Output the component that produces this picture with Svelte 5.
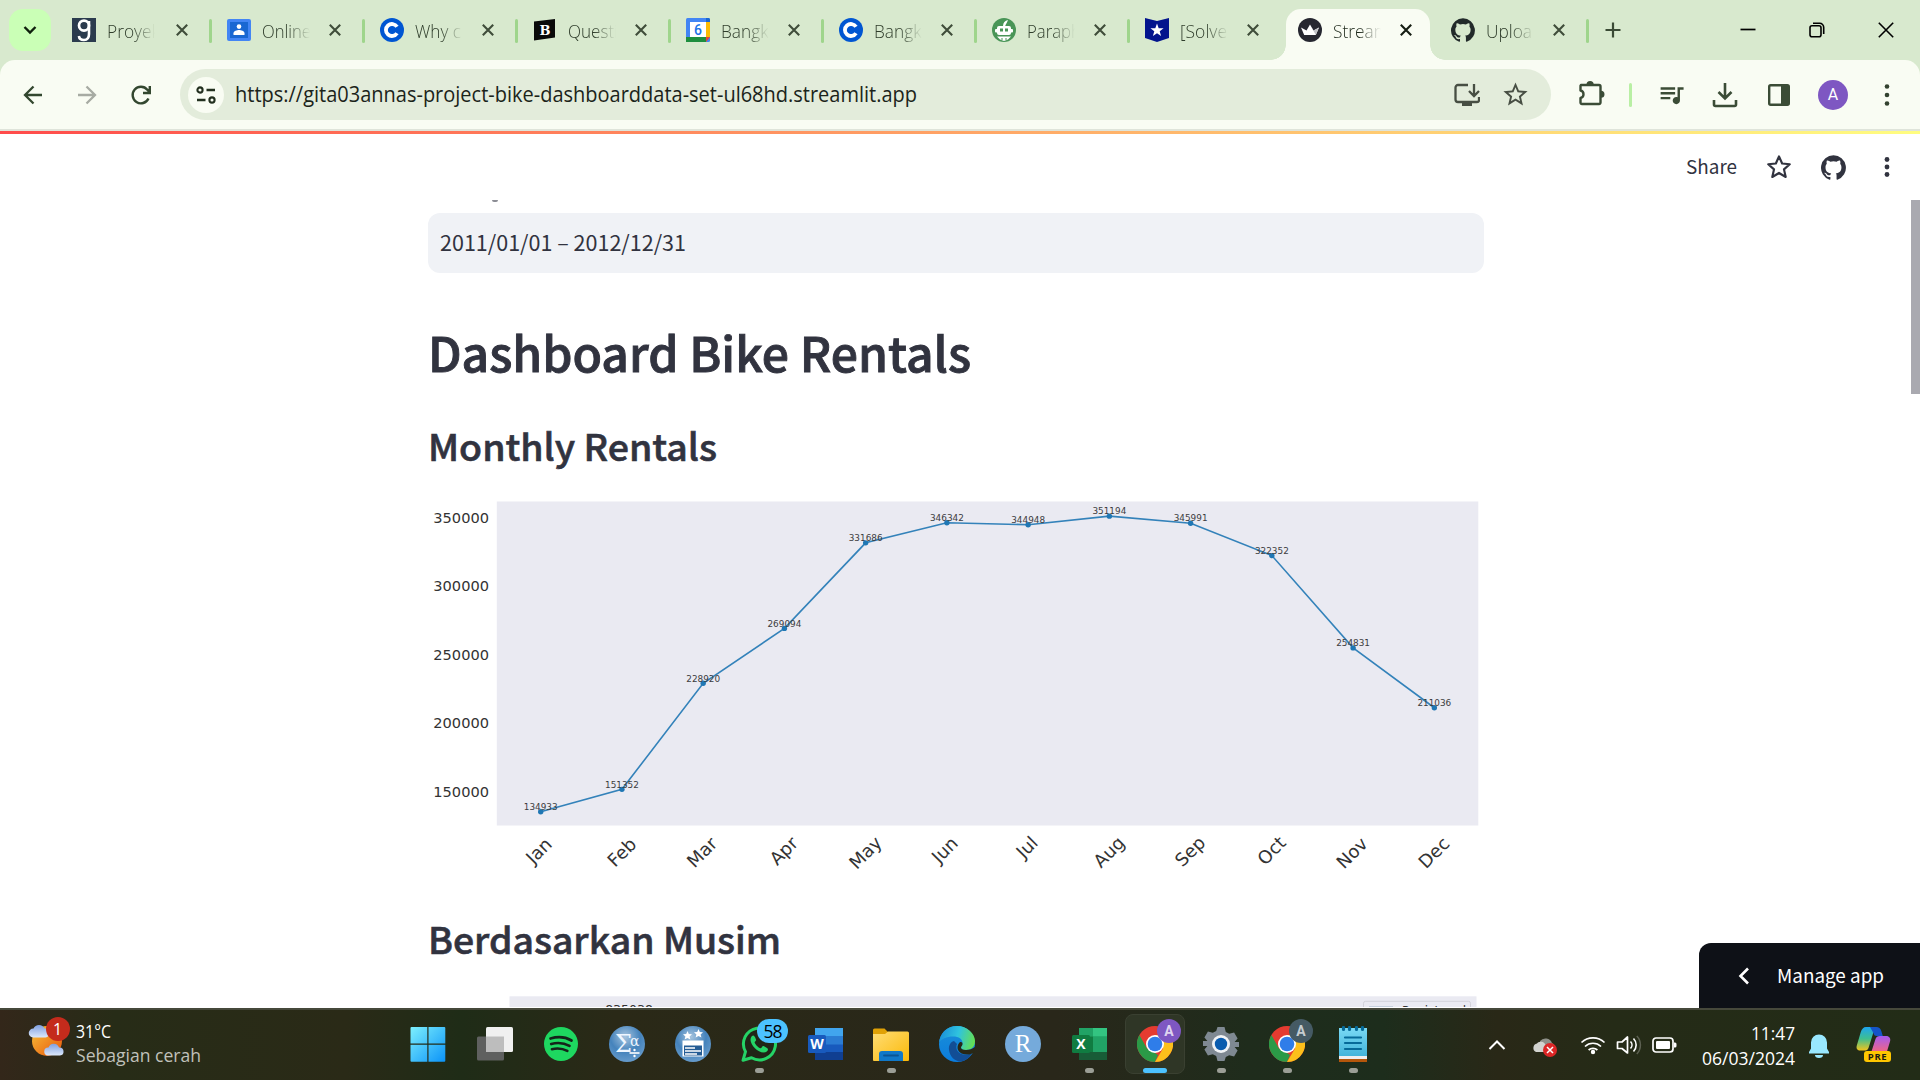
<script>
  const tabs = [
    { title: 'Proyek', icon: 'goodreads', w: 53 },
    { title: 'Online', icon: 'classroom', w: 49 },
    { title: 'Why c', icon: 'coursera', w: 46 },
    { title: 'Questi', icon: 'bold', w: 50 },
    { title: 'Bangk', icon: 'calendar', w: 47.5 },
    { title: 'Bangk', icon: 'coursera', w: 47.5 },
    { title: 'Paraph', icon: 'quill', w: 54 },
    { title: '[Solve', icon: 'shield', w: 47 },
    { title: 'Stream', icon: 'streamlit', w: 56, active: true },
    { title: 'Uploa', icon: 'github', w: 46 }
  ];

  const months = [
    { name: 'Jan', value: 134933, lx: 538.8, ly: 851.3 },
    { name: 'Feb', value: 151352, lx: 621.8, ly: 852.8 },
    { name: 'Mar', value: 228920, lx: 702, ly: 853 },
    { name: 'Apr', value: 269094, lx: 783.6, ly: 851.5 },
    { name: 'May', value: 331686, lx: 865.3, ly: 853.3 },
    { name: 'Jun', value: 346342, lx: 944.7, ly: 850.5 },
    { name: 'Jul', value: 344948, lx: 1026.8, ly: 847.8 },
    { name: 'Aug', value: 351194, lx: 1108.9, ly: 852.5 },
    { name: 'Sep', value: 345991, lx: 1190, ly: 852 },
    { name: 'Oct', value: 322352, lx: 1271.4, ly: 851.3 },
    { name: 'Nov', value: 254831, lx: 1351.9, ly: 853.5 },
    { name: 'Dec', value: 211036, lx: 1433.8, ly: 853.3 }
  ];
  const ticks = [350000, 300000, 250000, 200000, 150000];
  const px = (i) => 540.7 + i * 81.24;
  const py = (v) => 517.8 + (350000 - v) * 0.001367;
  const line = months.map((m, i) => `${px(i)},${py(m.value)}`).join(' ');

  const apps = [
    { id: 'windows' }, { id: 'taskview' }, { id: 'spotify' }, { id: 'sigma' }, { id: 'ballot' },
    { id: 'whatsapp', open: true }, { id: 'word' }, { id: 'folder', open: true }, { id: 'edge' },
    { id: 'r' }, { id: 'excel', open: true }, { id: 'chrome', active: true },
    { id: 'gear', open: true }, { id: 'chrome2', open: true }, { id: 'notepad', open: true }
  ];

  const githubPath = 'M12 .3a12 12 0 0 0-3.8 23.38c.6.12.83-.26.83-.57L9 21.07c-3.34.72-4.04-1.61-4.04-1.61-.55-1.39-1.34-1.76-1.34-1.76-1.08-.74.09-.73.09-.73 1.2.09 1.83 1.24 1.83 1.24 1.08 1.83 2.81 1.3 3.5 1 .1-.78.42-1.31.76-1.61-2.67-.3-5.47-1.33-5.47-5.93 0-1.31.47-2.38 1.24-3.22-.14-.3-.54-1.52.1-3.18 0 0 1-.32 3.3 1.23a11.5 11.5 0 0 1 6 0c2.28-1.55 3.29-1.23 3.29-1.23.64 1.66.24 2.88.12 3.18a4.65 4.65 0 0 1 1.23 3.22c0 4.61-2.8 5.63-5.48 5.92.42.36.81 1.1.81 2.22l-.01 3.29c0 .31.2.69.82.57A12 12 0 0 0 12 .3';
  const starPath = 'M22 9.24l-7.19-.62L12 2 9.19 8.63 2 9.24l5.46 4.73L5.82 21 12 17.27 18.18 21l-1.63-7.03L22 9.24zM12 15.4l-3.76 2.27 1-4.28-3.32-2.88 4.38-.38L12 6.1l1.71 4.04 4.38.38-3.32 2.88 1 4.28L12 15.4z';
</script>

{#snippet label(text, width, height, baseline, cls)}
  <svg class="label {cls}" {width} {height}>
    <text x="0" y={baseline} textLength={width} lengthAdjust="spacingAndGlyphs">{text}</text>
  </svg>
{/snippet}

{#snippet favicon(id)}
  <svg class="favicon" width="24" height="24" viewBox="0 0 24 24">
    {#if id === 'goodreads'}
      <rect width="24" height="24" fill="#2b3b4e" />
      <ellipse cx="12" cy="7.600" rx="5" ry="5" fill="none" stroke="#fff" stroke-width="2.700" />
      <path d="M17 3v13c0 4.300-2 6-5 6s-4.800-1.300-5.100-4" fill="none" stroke="#fff" stroke-width="2.600" />
    {:else if id === 'classroom'}
      <rect y="1" width="24" height="22" rx="2" fill="#4285f4" />
      <rect x="3" y="4" width="18" height="16" fill="#1967d2" />
      <circle cx="12" cy="8.600" r="2.300" fill="#fff" />
      <path d="M6.500 17v-1.800c0-2 3.500-3.200 5.500-3.200s5.500 1.200 5.500 3.200V17z" fill="#fff" />
    {:else if id === 'coursera'}
      <circle cx="12" cy="12" r="12" fill="#0056d2" />
      <path d="M17 8.800A6 6 0 1 0 17 15.200" fill="none" stroke="#fff" stroke-width="3.800" />
    {:else if id === 'bold'}
      <path d="M1 3.500L22 1v18.500L1 22.500z" fill="#0a0a0a" />
      <text x="6.500" y="16.500" class="slab" fill="#fff">B</text>
    {:else if id === 'calendar'}
      <rect width="24" height="24" rx="1.500" fill="#4285f4" />
      <rect x="20" y="4" width="4" height="15" fill="#fbbc04" />
      <rect y="19" width="20" height="5" fill="#1e8e3e" />
      <path d="M20 0h2.500a1.500 1.500 0 0 1 1.500 1.500V4h-4z" fill="#1967d2" />
      <path d="M20 19h4l-4 5z" fill="#ea4335" />
      <rect x="4" y="4" width="16" height="15" fill="#fff" />
      <text x="12" y="16.800" class="cal" text-anchor="middle" fill="#1a73e8">6</text>
    {:else if id === 'quill'}
      <circle cx="12" cy="12" r="12" fill="#499557" />
      <path d="M11 8c0-3 2-5.500 5-6-1 3-2 3.500-2.800 6z" fill="#fff" />
      <rect x="5" y="8" width="14" height="9" rx="2" fill="#fff" />
      <rect x="3" y="11" width="18" height="3.500" rx="1" fill="#fff" />
      <rect x="8" y="10.500" width="3" height="3" fill="#499557" /><rect x="13" y="10.500" width="3" height="3" fill="#499557" />
      <path d="M5 18.500h14l-3 3-4 1.500-4-1.500z" fill="#fff" /><path d="M9 21h2M13 21h2" stroke="#499557" />
    {:else if id === 'shield'}
      <path d="M0 0l12 3L24 0v20l-12 4L0 20z" fill="#02148d" />
      <path d="M12 5.500l1.700 4.700 4.900.1-3.900 3 1.400 4.800-4.100-2.800-4.100 2.800 1.400-4.800-3.900-3 4.900-.1z" fill="#fff" />
    {:else if id === 'streamlit'}
      <circle cx="12" cy="12" r="12" fill="#262730" />
      <path d="M3 9.500l5.500 3L12 6.500l3.500 6 5.500-3-3.200 7.500H6.200z" fill="#fff" />
      <path d="M12 6.500l3.500 6 5.500-3-3.200 7.500z" fill="#c3c4c8" />
    {:else}
      <path d={githubPath} fill="#222a2a" />
    {/if}
  </svg>
{/snippet}

{#snippet chromeLogo()}
  <circle cx="18" cy="18" r="18" fill="#e53b30" />
  <path d="M2.400 9L10 22.500 18 27l3 2-3 7A18 18 0 0 1 2.400 9z" fill="#2b9a47" />
  <path d="M18 9h15.600A18 18 0 0 1 18 36l8-13.500z" fill="#fcc01b" />
  <circle cx="18" cy="18" r="9" fill="#fff" /><circle cx="18" cy="18" r="7.300" fill="#2f7de9" />
{/snippet}

{#snippet appIcon(id)}
  <svg class="app-icon {id}" width="36" height="36" viewBox="0 0 36 36">
    {#if id === 'windows'}
      <path d="M.5 2a1 1 0 0 1 1-1h15.800v16.500H.5zM18.500 1h15.800a1 1 0 0 1 1 1v15.500H18.500zM.5 18.700h16.800v17H1.500a1 1 0 0 1-1-1zM18.500 18.700h16.800v16a1 1 0 0 1-1 1H18.500z" fill="url(#win)" />
    {:else if id === 'taskview'}
      <rect x="0" y="10.500" width="27" height="24" rx="1.500" fill="#5f605f" />
      <rect x="9" y="1" width="27" height="25" rx="1.500" fill="#f0f0f0" />
      <rect x="9" y="10.500" width="18" height="15.500" fill="#bdbdbd" />
    {:else if id === 'spotify'}
      <circle cx="18" cy="18" r="17" fill="#1ed760" />
      <path d="M7.500 12.500c7-2 15-1.500 21 2M8.200 18c6-1.600 13-1 18.300 1.900M9 23.200c5-1.200 10.500-.8 15.300 1.700" fill="none" stroke="#15231a" stroke-width="2.700" stroke-linecap="round" />
    {:else if id === 'sigma'}
      <circle cx="18" cy="18" r="18" fill="url(#orb)" />
      <text x="6" y="25.500" class="math" fill="#eef6ff">Σ</text>
      <text x="21" y="20" class="math small" fill="#eef6ff">α</text>
      <path d="M20.500 27h10" stroke="#fff" stroke-width="1.600" /><circle cx="25.500" cy="24" r="1.200" fill="#fff" /><circle cx="25.500" cy="30" r="1.200" fill="#fff" />
    {:else if id === 'ballot'}
      <circle cx="18" cy="18" r="18" fill="url(#orb)" />
      <rect x="7.500" y="14.500" width="21" height="16" fill="#fff" />
      <path d="M9 19.500h18v10H9z" fill="#245c95" />
      <path d="M10 22h10M10 25h16M10 28h12" stroke="#fff" stroke-width="1.300" />
      <path d="M12.500 5l1.300 3 3.200.2-2.400 2.200.8 3.200-2.900-1.700-2.900 1.700.8-3.200L8 8.200l3.200-.2zM23.500 3l1.300 3 3.200.2-2.400 2.200.8 3.200-2.900-1.700-2.900 1.700.8-3.200L19 6.200l3.200-.2z" fill="#fff" />
    {:else if id === 'whatsapp'}
      <path d="M2 34.300l2.500-8.600A16 16 0 1 1 10.500 31.800z" fill="#202617" stroke="#25d366" stroke-width="3" stroke-linejoin="round" />
      <path d="M12.300 9.500c-1 0-2.800 1.500-2.800 4.300 0 5.500 7.500 12.700 13 12.700 2.800 0 4.500-1.600 4.500-3.600 0-.8-4.300-3-4.900-3-.8 0-1.700 2.500-2.700 2.300-2-.6-5-3.500-5.700-5.500-.3-.9 1.500-1.800 1.500-2.600 0-.6-1.600-4.600-2.900-4.600z" fill="#25d366" />
    {:else if id === 'word' || id === 'excel'}
      {@const w = id === 'word'}
      <path d="M8 2h28v32H8z" fill={w ? '#185abd' : '#21a366'} />
      <path d="M8 2h28v8.500H8z" fill={w ? '#41a5ee' : '#33c481'} />
      <path d="M8 10.500h28v8H8z" fill={w ? '#2b7cd3' : '#21a366'} />
      {#if !w}<path d="M8 2h14v8.500H8z" fill="#21a366" /><path d="M8 10.500h14V26H8z" fill="#107c41" />{/if}
      <path d="M8 26h28v8H8z" fill={w ? '#103f91' : '#185c37'} />
      <rect x="1" y="9" width="18" height="18" rx="1.500" fill={w ? '#185abd' : '#107c41'} />
      <text x="10" y="23" class="office" text-anchor="middle" fill="#fff">{w ? 'W' : 'X'}</text>
    {:else if id === 'folder'}
      <path d="M0 4a1.500 1.500 0 0 1 1.500-1.500h10L15 6v6H0z" fill="#e0a106" />
      <path d="M0 8h12l3-2.500h19.500A1.500 1.500 0 0 1 36 7v27a1 1 0 0 1-1 1H1a1 1 0 0 1-1-1z" fill="url(#fold)" />
      <path d="M6 35v-7a3 3 0 0 1 3-3h18a3 3 0 0 1 3 3v7z" fill="#1078c8" />
      <path d="M11 29.500h14" stroke="#0b5594" stroke-width="1.800" stroke-linecap="round" />
    {:else if id === 'edge'}
      <circle cx="18" cy="18" r="18" fill="url(#edge1)" />
      <path d="M15 15c-4 1-5.500 5-5 9 .8 6.500 6 11.700 12 11.500 5-1 9-4 11-8.500-5 3-12 2-14.500-2-1.500-2.500-1.500-5-.5-7z" fill="#124e96" />
      <path d="M0 17C1 7 8 0 18 0s18 7.500 18 15c0 6-4 9-9 9-3.500 0-5-1.300-5-2.600 0-1.300 1.500-2 1.500-4.400C23.500 13 20 10.500 14 10.500S1.500 13 0 17z" fill="url(#edge2)" />
      <path d="M36 25.500c-1 1-2 1.800-3.500 2.200-5 2-11.500.5-13.500-3.700-1-2.300-.5-5.500 1.500-7.500 1.800-1 3.200 0 3 1.800-.1 1.500-1.500 2-1.500 3.300 0 1.300 1.500 2.400 5 2.400 4 0 6-1 9-3z" fill="#292817" />
    {:else if id === 'r'}
      <circle cx="18" cy="18" r="18" fill="#75aadb" />
      <text x="18" y="25.500" class="serif-r" text-anchor="middle" fill="#fff">R</text>
    {:else if id === 'chrome' || id === 'chrome2'}
      {@render chromeLogo()}
    {:else if id === 'gear'}
      <path d="M14.500 1h7l1.300 4.900 3.400 1.900 4.900-1.300 3.500 6-3 3.500h4.400v5h-4.400l3 3.500-3.500 6-4.900-1.300-3.400 1.900L21.500 35h-7l-1.300-4.900-3.400-1.900-4.900 1.300-3.500-6 3-3.500H0v-5h4.400l-3-3.500 3.500-6 4.900 1.300 3.400-1.900z" fill="#7f8992" />
      <circle cx="18" cy="18" r="9" fill="#f1f3f5" /><circle cx="18" cy="18" r="6.200" fill="#0a5cae" />
    {:else}
      <rect x="4" y="2" width="28" height="30" fill="url(#note)" />
      <path d="M4 30h28v3H4z" fill="#eee" /><path d="M4 33h28v3H4z" fill="#b4560b" />
      <path d="M10 11.500h16M10 17h16M10 23h16" stroke="#066a99" stroke-width="2.200" stroke-linecap="round" />
      <path d="M8.500 1.500v2M14.500 1.500v2M21.500 1.500v2M27.500 1.500v2" stroke="#066a99" stroke-width="3.200" stroke-linecap="round" />
    {/if}
  </svg>
{/snippet}

<div class="screen">
  <svg class="defs" width="0" height="0">
    <defs>
      <linearGradient id="win" x1="0" y1="0" x2="1" y2="1"><stop offset="0" stop-color="#7df0fd" /><stop offset="1" stop-color="#0b93f8" /></linearGradient>
      <radialGradient id="orb" cx=".45" cy=".3" r=".75"><stop offset="0" stop-color="#a5c4de" /><stop offset=".55" stop-color="#4583bc" /><stop offset="1" stop-color="#6b9fce" /></radialGradient>
      <linearGradient id="fold" x1="0" y1="0" x2="1" y2="1"><stop offset="0" stop-color="#ffdd75" /><stop offset="1" stop-color="#fbb908" /></linearGradient>
      <linearGradient id="edge1" x1="0" y1="0" x2="0" y2="1"><stop offset="0" stop-color="#1b8fd8" /><stop offset="1" stop-color="#0b7cdc" /></linearGradient>
      <linearGradient id="edge2" x1="0" y1=".4" x2="1" y2=".6"><stop offset="0" stop-color="#1a8fd8" /><stop offset=".5" stop-color="#2fc3df" /><stop offset="1" stop-color="#66e04f" /></linearGradient>
      <linearGradient id="note" x1="0" y1="0" x2="0" y2="1"><stop offset="0" stop-color="#79d9f5" /><stop offset="1" stop-color="#3fb2d8" /></linearGradient>
      <linearGradient id="sun" x1="0" y1="0" x2="1" y2="1"><stop offset="0" stop-color="#f7c23a" /><stop offset="1" stop-color="#e8550c" /></linearGradient>
      <linearGradient id="cloud" x1="0" y1="0" x2="0" y2="1"><stop offset="0" stop-color="#7f9fe0" /><stop offset="1" stop-color="#dce8fb" /></linearGradient>
      <linearGradient id="copA" x1="0" y1="0" x2="0" y2="1"><stop offset="0" stop-color="#1da5f0" /><stop offset=".5" stop-color="#3fbf8f" /><stop offset="1" stop-color="#f2c41c" /></linearGradient>
      <linearGradient id="copB" x1="0" y1="0" x2="0" y2="1"><stop offset="0" stop-color="#a55bf0" /><stop offset="1" stop-color="#f6677a" /></linearGradient>
    </defs>
  </svg>

  <header class="strip">
    <button class="tab-search" aria-label="Search tabs">
      <svg width="14" height="10" viewBox="0 0 14 10"><path d="M1.500 2l5.500 5.500L12.500 2" fill="none" stroke="#0f1f0c" stroke-width="2.400" /></svg>
    </button>
    <div class="tabs">
      {#each tabs as tab, i}
        <div class="tab" class:active={tab.active} class:sep={i !== 7 && i !== 8}>
          <div class="tab-body">
            {@render favicon(tab.icon)}
            <div class="tab-title">{@render label(tab.title, tab.w, 30, 23, 'tab-text')}</div>
            <svg class="close" width="12" height="12" viewBox="0 0 12 12"><path d="M.8.800l10.400 10.400M11.200.8L.8 11.200" stroke="currentColor" stroke-width="2.100" /></svg>
          </div>
        </div>
      {/each}
    </div>
    <svg class="plus" width="16" height="16" viewBox="0 0 16 16"><path d="M8 .5v15M.5 8h15" stroke="#3a4a35" stroke-width="2.200" /></svg>
    <div class="win-controls">
      <svg width="16" height="16" viewBox="0 0 16 16"><path d="M.5 7.500h15" stroke="#000" stroke-width="1.700" /></svg>
      <svg width="16" height="16" viewBox="0 0 16 16"><rect x="1" y="3.800" width="11" height="11" rx="2" fill="none" stroke="#000" stroke-width="1.600" /><path d="M4 1.300h6.500A4 4 0 0 1 14.700 5.500V12" fill="none" stroke="#000" stroke-width="1.600" /></svg>
      <svg width="16" height="16" viewBox="0 0 16 16"><path d="M.8.800l14.400 14.400M15.200.8L.8 15.200" stroke="#000" stroke-width="1.600" /></svg>
    </div>
  </header>

  <div class="toolbar-wrap">
    <div class="toolbar">
      <div class="nav">
        <svg width="24" height="24" viewBox="0 0 24 24"><path d="M21 12H4.500M12.500 3.500L4 12l8.500 8.500" fill="none" stroke="#33472f" stroke-width="2.300" /></svg>
        <svg width="24" height="24" viewBox="0 0 24 24"><path d="M3 12h16.500M11.500 3.500L20 12l-8.500 8.500" fill="none" stroke="#a7aba3" stroke-width="2.300" /></svg>
        <svg width="24" height="24" viewBox="0 0 24 24"><path d="M19.500 15.500a8.300 8.300 0 1 1-1.200-8.800L20.500 9M20.800 3v7H14" fill="none" stroke="#33472f" stroke-width="2.400" /></svg>
      </div>
      <div class="omnibox">
        <span class="site-info">
          <svg width="20" height="18" viewBox="0 0 20 18"><path d="M10.500 4H19M1 14h8.500" stroke="#23301f" stroke-width="2.400" /><circle cx="4" cy="4" r="2.600" fill="none" stroke="#23301f" stroke-width="2.100" /><circle cx="16" cy="14" r="2.600" fill="none" stroke="#23301f" stroke-width="2.100" /></svg>
        </span>
        {@render label('https://gita03annas-project-bike-dashboarddata-set-ul68hd.streamlit.app', 682, 51, 32.500, 'url')}
        <svg class="install" width="26" height="24" viewBox="0 0 26 24"><path d="M14 2H4a2.500 2.500 0 0 0-2.500 2.500v12A2.500 2.500 0 0 0 4 19h19a2 2 0 0 0 2-2v-3" fill="none" stroke="#474e43" stroke-width="2.300" /><path d="M8 19h10v4H8z" fill="#474e43" /><path d="M20 1v11M15 8l5 5 5-5" fill="none" stroke="#474e43" stroke-width="2.300" /></svg>
        <svg class="bookmark" width="29" height="29" viewBox="0 0 24 24"><path d={starPath} fill="#474e43" /></svg>
      </div>
      <svg class="puzzle" width="28" height="28" viewBox="0 0 28 28"><path d="M4 6h18a1.500 1.500 0 0 1 1.500 1.500v16A1.500 1.500 0 0 1 22 25H5a1.500 1.500 0 0 1-1.500-1.500V19c4-.8 4-6.700 0-7.500V7.500A1.500 1.500 0 0 1 4 6z" fill="none" stroke="#3b4c36" stroke-width="2.400" stroke-linejoin="round" /><path d="M9.500 5.500a3.600 3.600 0 0 1 7.200 0zM24 11.800a3.500 3.500 0 0 1 0 7z" fill="#3b4c36" /></svg>
      <span class="bar-sep"></span>
      <svg class="queue" width="29" height="29" viewBox="0 0 24 24"><path d="M15 6H3v2h12V6zm0 4H3v2h12v-2zM3 16h8v-2H3v2zM17 6v8.180c-.31-.11-.65-.18-1-.18-1.660 0-3 1.340-3 3s1.340 3 3 3 3-1.340 3-3V8h3V6h-5z" fill="#3b4c36" /></svg>
      <svg class="download" width="26" height="26" viewBox="0 0 26 26"><path d="M13 1v15M6.500 10l6.500 6.500 6.500-6.500M2 18v4.500A1.500 1.500 0 0 0 3.500 24h19a1.500 1.500 0 0 0 1.500-1.500V18" fill="none" stroke="#3b4c36" stroke-width="2.600" /></svg>
      <svg class="side" width="24" height="24" viewBox="0 0 24 24"><rect x="2.200" y="2.200" width="19.600" height="19.600" rx="1.500" fill="none" stroke="#3b4c36" stroke-width="2.400" /><path d="M14 2h8v20h-8z" fill="#3b4c36" /></svg>
      <span class="avatar">A</span>
      <svg class="dots" width="6" height="24" viewBox="0 0 6 24"><circle cx="3" cy="3.500" r="2.300" /><circle cx="3" cy="12" r="2.300" /><circle cx="3" cy="20.500" r="2.300" /></svg>
    </div>
  </div>
  <div class="decoration"></div>

  <div class="app">
    <div class="app-header">
      {@render label('Share', 51, 66, 40, 'source share')}
      <svg class="fav" width="26" height="26" viewBox="0 0 24 24"><path d="M12 2.200l2.900 6.600 7 .7-5.300 4.700 1.600 7L12 17.500 5.800 21.200l1.600-7L2.100 9.500l7-.7z" fill="none" stroke="#31333f" stroke-width="2" stroke-linejoin="round" /></svg>
      <svg class="gh" width="25" height="25" viewBox="0 0 24 24"><path d={githubPath} fill="#31333f" /></svg>
      <svg class="dots dark" width="6" height="24" viewBox="0 0 6 24"><circle cx="3" cy="4.500" r="2.400" /><circle cx="3" cy="12" r="2.400" /><circle cx="3" cy="19.500" r="2.400" /></svg>
    </div>

    <div class="scroll">
      <main>
        <div class="label-tail"><span></span></div>
        <div class="date-input">{@render label('2011/01/01 – 2012/12/31', 246, 60, 38.200, 'source date')}</div>
        <h1>{@render label('Dashboard Bike Rentals', 543, 99, 98.800, 'source h1')}</h1>
        <h2>{@render label('Monthly Rentals', 289, 89, 88.800, 'source h2')}</h2>
        <svg class="chart" width="1056" height="420" viewBox="428 461 1056 420">
          <rect x="496.800" y="501.500" width="981.500" height="324" fill="#eaeaf2" />
          {#each ticks as t}
            <text class="tick" x="489" y={py(t) + 5.300} text-anchor="end">{t}</text>
          {/each}
          <polyline points={line} fill="none" stroke="#1f77b4" stroke-opacity=".9" stroke-width="1.600" />
          {#each months as m, i}
            <circle cx={px(i)} cy={py(m.value)} r="2.700" fill="#1f77b4" />
            <text class="point" x={px(i)} y={py(m.value) - 1.800} text-anchor="middle">{m.value}</text>
            <text class="month" transform="translate({m.lx} {m.ly - 0.7}) rotate(-45)" y="6.400" text-anchor="middle">{m.name}</text>
          {/each}
        </svg>
        <h2>{@render label('Berdasarkan Musim', 353, 73, 72.800, 'source h2')}</h2>
        <svg class="chart" width="1056" height="53" viewBox="428 955 1056 53">
          <rect x="509.500" y="997.300" width="967" height="12" fill="#eaeaf2" />
          <text class="bar-value" x="629" y="1015" text-anchor="middle">835038</text>
          <rect x="1363.500" y="1002.300" width="107" height="20" rx="2" fill="#eaeaf2" stroke="#d2d2da" />
          <rect x="1369" y="1007" width="24" height="5" fill="#c6d0dd" />
          <text class="legend" x="1402" y="1016">Registered</text>
        </svg>
      </main>
      <div class="scrollbar"></div>
    </div>

    <div class="manage">
      <svg width="12" height="18" viewBox="0 0 12 18"><path d="M10 1.500L2.500 9l7.500 7.500" fill="none" stroke="#fff" stroke-width="2.600" /></svg>
      {@render label('Manage app', 107, 65, 39.500, 'source manage-text')}
    </div>
  </div>

  <footer class="taskbar">
    <div class="weather">
      <svg width="38" height="38" viewBox="0 0 38 38">
        <circle cx="19" cy="19" r="15" fill="url(#sun)" />
        <path d="M5 15.500a4.500 4.500 0 0 1 .5-9 6 6 0 0 1 11 0 4.500 4.500 0 0 1 1 9z" fill="url(#cloud)" />
        <path d="M20 33.500a4 4 0 0 1 .5-8 5.500 5.500 0 0 1 10.500 0 4 4 0 0 1 1 8z" fill="url(#cloud)" />
      </svg>
      <span class="weather-badge">1</span>
      <div class="weather-text">
        {@render label('31°C', 35, 24, 20, 'seg white')}
        {@render label('Sebagian cerah', 125, 24, 20, 'seg grey')}
      </div>
    </div>
    <div class="apps">
      {#each apps as app}
        <div class="slot" class:current={app.active}>
          {@render appIcon(app.id)}
          {#if app.id === 'whatsapp'}<span class="count">58</span>{/if}
          {#if app.id === 'chrome'}<span class="profile purple">A</span>{/if}
          {#if app.id === 'chrome2'}<span class="profile slate">A</span>{/if}
          {#if app.open}<i class="dot"></i>{/if}
          {#if app.active}<i class="dot wide"></i>{/if}
        </div>
      {/each}
    </div>
    <div class="tray">
      <svg class="up" width="18" height="12" viewBox="0 0 18 12"><path d="M1.500 10L9 2.500l7.500 7.500" fill="none" stroke="#fff" stroke-width="2" /></svg>
      <svg class="cloud-off" width="26" height="22" viewBox="0 0 26 22">
        <path d="M8 5a7 7 0 0 1 12 2 4 4 0 0 1 1 7H8z" fill="#8f918a" /><path d="M4 16a4.500 4.500 0 0 1 1-8.500 5 5 0 0 1 8.500 1.200L20 12v4z" fill="#d2d3cf" />
        <circle cx="18" cy="14" r="7" fill="#dc2626" /><path d="M15 11l6 6M21 11l-6 6" stroke="#fff" stroke-width="1.500" />
      </svg>
      <svg class="wifi" width="26" height="20" viewBox="0 0 26 20"><path d="M1.500 7.500a16.500 16.500 0 0 1 23 0M5 11.500a11.500 11.500 0 0 1 16 0M8.600 15a6.500 6.500 0 0 1 8.800 0" fill="none" stroke="#fff" stroke-width="1.700" /><circle cx="13" cy="17" r="2.200" fill="#fff" /></svg>
      <svg class="sound" width="26" height="22" viewBox="0 0 26 22"><path d="M1.500 8h4.500l5.500-5v16L6 14.500H1.500z" fill="none" stroke="#fff" stroke-width="1.700" stroke-linejoin="round" /><path d="M14.500 7.500a5 5 0 0 1 0 7M17.500 4.500a9.300 9.300 0 0 1 0 13" fill="none" stroke="#fff" stroke-width="1.600" /><path d="M20.800 2a13 13 0 0 1 0 18" fill="none" stroke="#5d6152" stroke-width="1.500" /></svg>
      <svg class="battery" width="26" height="16" viewBox="0 0 26 16"><rect x="1" y="1" width="20" height="14" rx="3" fill="none" stroke="#fff" stroke-width="1.700" /><rect x="4" y="4" width="14" height="8" rx="1" fill="#fff" /><path d="M22 5.500h1a1.500 1.500 0 0 1 1.500 1.500v2a1.500 1.500 0 0 1-1.500 1.500h-1z" fill="#fff" /></svg>
      <div class="clock">
        {@render label('11:47', 44, 24, 19, 'seg white')}
        {@render label('06/03/2024', 93, 24, 19.500, 'seg white')}
      </div>
      <svg class="bell" width="22" height="24" viewBox="0 0 22 24"><path d="M11 .5a8 8 0 0 0-8 8v6L1 18v1.500h20V18l-2-3.500v-6a8 8 0 0 0-8-8z" fill="#99e8ff" /><path d="M7 21h8a4 3 0 0 1-8 0z" fill="#99e8ff" /></svg>
      <div class="copilot">
        <svg width="36" height="30" viewBox="0 0 36 30">
          <path d="M10 0h12c-2 0-3.500 1.500-4 3.500L12.500 21c-.6 1.500-1.500 2.500-3 2.500H4C1 23.500 0 21 .8 18.500l4-13.500C5.700 2 7.500 0 10 0z" fill="url(#copA)" />
          <path d="M14 0h6c3 0 4.500 1.500 5.300 4l1.500 5H21c-2.500 0-3-1-3.600-3z" fill="#1554c8" />
          <path d="M24 9h6c3.500 0 5 2.500 4 5.500L30.500 26H15l4.500-14C20.200 10 21.500 9 24 9z" fill="url(#copB)" />
        </svg>
        <span class="pre">PRE</span>
      </div>
    </div>
  </footer>
</div>

<style>
  :global(body) { margin: 0; overflow: hidden; }
  .screen { width: 1920px; height: 1080px; display: flex; flex-direction: column; background: #fff; overflow: hidden; position: relative; }
  svg { display: block; flex: none; }
  .defs { position: absolute; }
  .label { overflow: visible; }

  .strip { height: 60px; flex: none; background: #d8e9ce; display: flex; align-items: center; box-sizing: border-box; padding-left: 9px; }
  .tab-search { width: 42px; height: 42px; border: 0; padding: 0; border-radius: 14px; background: #caffb6; display: flex; align-items: center; justify-content: center; }
  .tabs { display: flex; align-self: stretch; margin-left: 11px; }
  .tab { width: 153px; height: 60px; display: flex; align-items: center; }
  .tab-body { width: 144px; height: 51px; margin-top: 9px; display: flex; align-items: center; box-sizing: border-box; padding: 0 0 9px 12px; }
  .tab:first-child .tab-body { padding-left: 10px; }
  .tab:first-child .close { margin-left: 19.500px; }
  .tab.sep::after { content: ''; width: 3px; height: 24px; border-radius: 2px; background: #9fd58c; margin-left: 3px; margin-top: 2px; }
  .tab-title { width: 49px; height: 30px; overflow: hidden; margin-left: 11px; -webkit-mask-image: linear-gradient(90deg, #000 52%, transparent 98%); mask-image: linear-gradient(90deg, #000 52%, transparent 98%); }
  .close { margin-left: 17.500px; color: #3f4d3a; }
  .tab.active .tab-body { background: #f9fcf3; border-radius: 15px 15px 0 0; position: relative; }
  .tab.active .close { color: #151d12; }
  .tab.active .tab-text { fill: #1f2a1c; }
  .tab.active .tab-body::before, .tab.active .tab-body::after { content: ''; position: absolute; bottom: 0; width: 15px; height: 15px; }
  .tab.active .tab-body::before { left: -15px; background: radial-gradient(circle at 0 0, transparent 14.500px, #f9fcf3 15px); }
  .tab.active .tab-body::after { right: -15px; background: radial-gradient(circle at 100% 0, transparent 14.500px, #f9fcf3 15px); }
  .tab-text { font: 17.500px "Open Sans", "Noto Sans", sans-serif; font-weight: 300; fill: #2f3d2b; }
  .plus { margin-left: 13px; }
  .win-controls { margin-left: 119px; display: flex; gap: 53px; }
  .slab { font: bold 13px "DejaVu Serif", serif; }
  .cal { font: 500 14px Roboto, sans-serif; }

  .toolbar-wrap { height: 69px; flex: none; background: #d8e9ce; border-bottom: 2px solid #dfe4da; }
  .toolbar { height: 69px; background: #f9fcf3; border-radius: 15px 15px 0 0; display: flex; align-items: center; }
  .nav { display: flex; gap: 30px; padding-left: 21px; width: 159px; box-sizing: border-box; }
  .omnibox { width: 1371px; height: 51px; margin-left: 21px; border-radius: 26px; background: #e3ecdb; display: flex; align-items: center; flex: none; }
  .site-info { width: 36px; height: 36px; margin: 0 11px 0 8px; border-radius: 50%; background: #f9fcf3; display: flex; align-items: center; justify-content: center; }
  .url { font: 21px "Open Sans", "Noto Sans", sans-serif; fill: #1b241a; }
  .install { margin-left: 537px; }
  .bookmark { margin-left: 21px; }
  .puzzle { margin-left: 26px; margin-top: -3px; }
  .bar-sep { width: 3px; height: 24px; border-radius: 2px; background: #b9efa4; margin-left: 24px; }
  .queue { margin-left: 25px; }
  .download { margin-left: 26px; }
  .side { margin-left: 29px; }
  .avatar { width: 30px; height: 30px; border-radius: 50%; margin-left: 27px; background: #7e57c2; color: #fff; font: 16px/30px Roboto, sans-serif; text-align: center; }
  .dots { margin-left: 36px; fill: #33422f; }
  .dots.dark { fill: #31333f; }
  .decoration { height: 3px; flex: none; background: linear-gradient(90deg, #ff4b4b, #fffd80); }

  .app { height: 874px; flex: none; position: relative; overflow: hidden; background: #fff; }
  .app-header { height: 66px; display: flex; align-items: center; padding-left: 1686px; }
  .fav { margin-left: 29px; }
  .gh { margin-left: 29px; }
  .app-header .dots { margin-left: 38px; }
  .source { font-family: "Noto Sans CJK JP", "Noto Sans", sans-serif; fill: #31333f; }
  .share { font-size: 19px; }
  .scroll { height: 808px; display: flex; justify-content: space-between; padding-left: 428px; }
  main { width: 1056px; }
  .label-tail { height: 13px; padding-left: 64px; }
  .label-tail span { display: block; width: 6px; height: 1.500px; background: #8c8d95; border-radius: 0 0 3px 3px; }
  .date-input { height: 60px; border-radius: 12px; background: #f0f2f6; padding-left: 12px; }
  .date { font-size: 21.600px; }
  h1, h2 { margin: 0; }
  .h1, .h2 { font-weight: 500; stroke: #31333f; }
  .h1 { font-size: 48px; stroke-width: .9px; }
  .h2 { font-size: 36.800px; stroke-width: .6px; }
  .chart { font-family: "DejaVu Sans", sans-serif; fill: #333; }
  .tick { font-size: 14.600px; }
  .point { font-size: 8.900px; fill: #3c3c3e; }
  .month { font-size: 18px; }
  .bar-value { font-size: 12.500px; }
  .legend { font-size: 12px; }
  .scrollbar { width: 9px; height: 194px; background: #a9a9b0; }
  .manage { position: absolute; right: 0; bottom: 0; width: 221px; height: 65px; border-radius: 12px 0 0 0; background: #0e1117; display: flex; align-items: center; box-sizing: border-box; padding-left: 39px; gap: 27px; }
  .manage-text { font-size: 19px; fill: #fff; }

  .taskbar { height: 72px; flex: none; box-sizing: border-box; border-top: 2px solid #46493b; display: grid; grid-template-columns: 396px 990px 1fr; background: linear-gradient(90deg, #33271a 0, #272c17 6%, #2a2a17 18%, #1f2c17 24%, #2a2917 32%, #29271a 55%, #1f2c1c 65%, #1d2d1c 72%, #292817 78%, #252b17 84%, #222c17 100%); }
  .weather { display: flex; position: relative; padding: 12px 0 0 28px; }
  .weather-badge { position: absolute; left: 45.500px; top: 7px; width: 24px; height: 24px; border-radius: 50%; background: #c42b1c; color: #fff; font: 16px/24px "Open Sans", sans-serif; text-align: center; }
  .weather-text { margin: -4px 0 0 10px; }
  .seg { font: 17.500px "Open Sans", "Noto Sans", sans-serif; }
  .white { fill: #fff; }
  .grey { fill: #c0c1bb; }
  .apps { display: flex; }
  .slot { width: 60px; height: 60px; margin: 4px 3px; border-radius: 8px; display: flex; align-items: center; justify-content: center; position: relative; box-sizing: border-box; }
  .windows { margin-left: -3px; }
  .slot.current { background: #2f3626; border: 1px solid #3a4031; }
  .dot { position: absolute; bottom: 1px; left: 25.500px; width: 9px; height: 5px; border-radius: 3px; background: #9b9e96; }
  .dot.wide { left: 17px; bottom: 0; width: 24px; background: #4cc2ff; }
  .count { position: absolute; left: 28px; top: 5px; width: 31px; height: 24px; border-radius: 12px; background: #4cc2ff; color: #000; font: 17.500px/24px "Open Sans", sans-serif; letter-spacing: -1px; text-align: center; }
  .profile { position: absolute; left: 32px; top: 5px; width: 24px; height: 24px; border-radius: 50%; color: #ded3f0; font: bold 14px/24px Roboto, sans-serif; text-align: center; }
  .slot.current .profile { left: 31px; top: 4px; }
  .purple { background: #7e57c2; }
  .slate { background: #455a64; color: #c5ccd0; }
  .math { font: 24px "DejaVu Serif", serif; }
  .math.small { font-size: 14px; }
  .office { font: bold 14px "Open Sans", sans-serif; }
  .serif-r { font: 25px "Liberation Serif", serif; }
  .tray { display: flex; align-items: center; padding-left: 102px; }
  .cloud-off { margin-left: 26px; margin-top: 3px; }
  .wifi { margin-left: 22px; }
  .sound { margin-left: 10px; }
  .battery { margin-left: 10px; }
  .clock { display: flex; flex-direction: column; align-items: flex-end; margin-left: 24px; width: 93px; }
  .bell { margin-left: 13px; margin-top: 2px; }
  .copilot { position: relative; margin-left: 26px; width: 36px; height: 36px; }
  .pre { position: absolute; left: 8px; top: 24px; width: 27px; height: 11px; border-radius: 3px; background: #fec600; color: #1c1c10; font: bold 9.500px/11px "Open Sans", sans-serif; letter-spacing: .6px; text-align: center; }
</style>
